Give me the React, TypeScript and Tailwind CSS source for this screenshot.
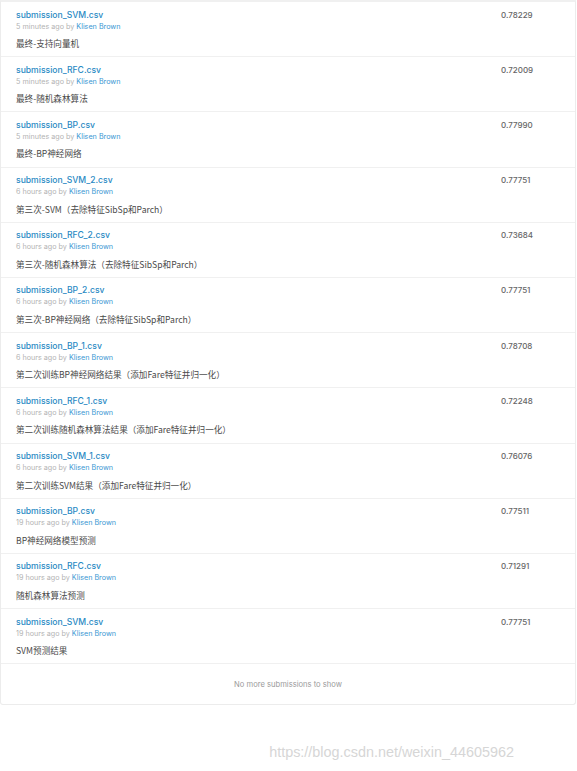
import React from "react";

// Submission rows shown in the list
const submissions = [
  { file: "submission_SVM.csv", time: "5 minutes ago", desc: "最终-支持向量机", score: "0.78229" },
  { file: "submission_RFC.csv", time: "5 minutes ago", desc: "最终-随机森林算法", score: "0.72009" },
  { file: "submission_BP.csv", time: "5 minutes ago", desc: "最终-BP神经网络", score: "0.77990" },
  { file: "submission_SVM_2.csv", time: "6 hours ago", desc: "第三次-SVM（去除特征SibSp和Parch）", score: "0.77751" },
  { file: "submission_RFC_2.csv", time: "6 hours ago", desc: "第三次-随机森林算法（去除特征SibSp和Parch）", score: "0.73684" },
  { file: "submission_BP_2.csv", time: "6 hours ago", desc: "第三次-BP神经网络（去除特征SibSp和Parch）", score: "0.77751" },
  { file: "submission_BP_1.csv", time: "6 hours ago", desc: "第二次训练BP神经网络结果（添加Fare特征并归一化）", score: "0.78708" },
  { file: "submission_RFC_1.csv", time: "6 hours ago", desc: "第二次训练随机森林算法结果（添加Fare特征并归一化）", score: "0.72248" },
  { file: "submission_SVM_1.csv", time: "6 hours ago", desc: "第二次训练SVM结果（添加Fare特征并归一化）", score: "0.76076" },
  { file: "submission_BP.csv", time: "19 hours ago", desc: "BP神经网络模型预测", score: "0.77511" },
  { file: "submission_RFC.csv", time: "19 hours ago", desc: "随机森林算法预测", score: "0.71291" },
  { file: "submission_SVM.csv", time: "19 hours ago", desc: "SVM预测结果", score: "0.77751" },
];

export default function App() {
  return (
    <div className="w-[577px] h-[771px] bg-white font-['Inter','Noto_Sans_CJK_SC',sans-serif] flex flex-col">
      {/* Submissions card */}
      <div className="w-[576px] border-x border-b border-t-2 border-[#ececec] border-t-[#f0f0f0] rounded-b-[3px]">
        {submissions.map((s, i) => (
          <div
            key={i}
            className="h-[55.2px] border-b border-[#f0f0f0] flex justify-between pl-[15px] pt-[6.5px]"
          >
            <div className="flex flex-col">
              <span className="text-[8.6px] leading-[12px] font-medium text-[#2a8ac4]">{s.file}</span>
              <span className="text-[7.2px] leading-[12px] text-[#b3b3b3]">
                {s.time} by <span className="text-[#3b97d3]">Klisen Brown</span>
              </span>
              <span className="mt-[4.5px] text-[8.6px] leading-[12px] text-[#4a4a4a] font-['Noto_Sans_CJK_SC',sans-serif]">
                {s.desc}
              </span>
            </div>
            {/* Score column, left aligned */}
            <span className="w-[74px] text-[8px] leading-[12px] font-medium text-[#666]">{s.score}</span>
          </div>
        ))}
        {/* Footer */}
        <div className="h-[40px] pt-[1px] flex items-center justify-center text-[7.6px] text-[#9a9a9a]">
          No more submissions to show
        </div>
      </div>
      {/* Watermark */}
      <div className="flex justify-end pr-[63px] pt-[37px] font-['Liberation_Sans',sans-serif] text-[14.4px] text-[#d6d6d6]">
        https://blog.csdn.net/weixin_44605962
      </div>
    </div>
  );
}
